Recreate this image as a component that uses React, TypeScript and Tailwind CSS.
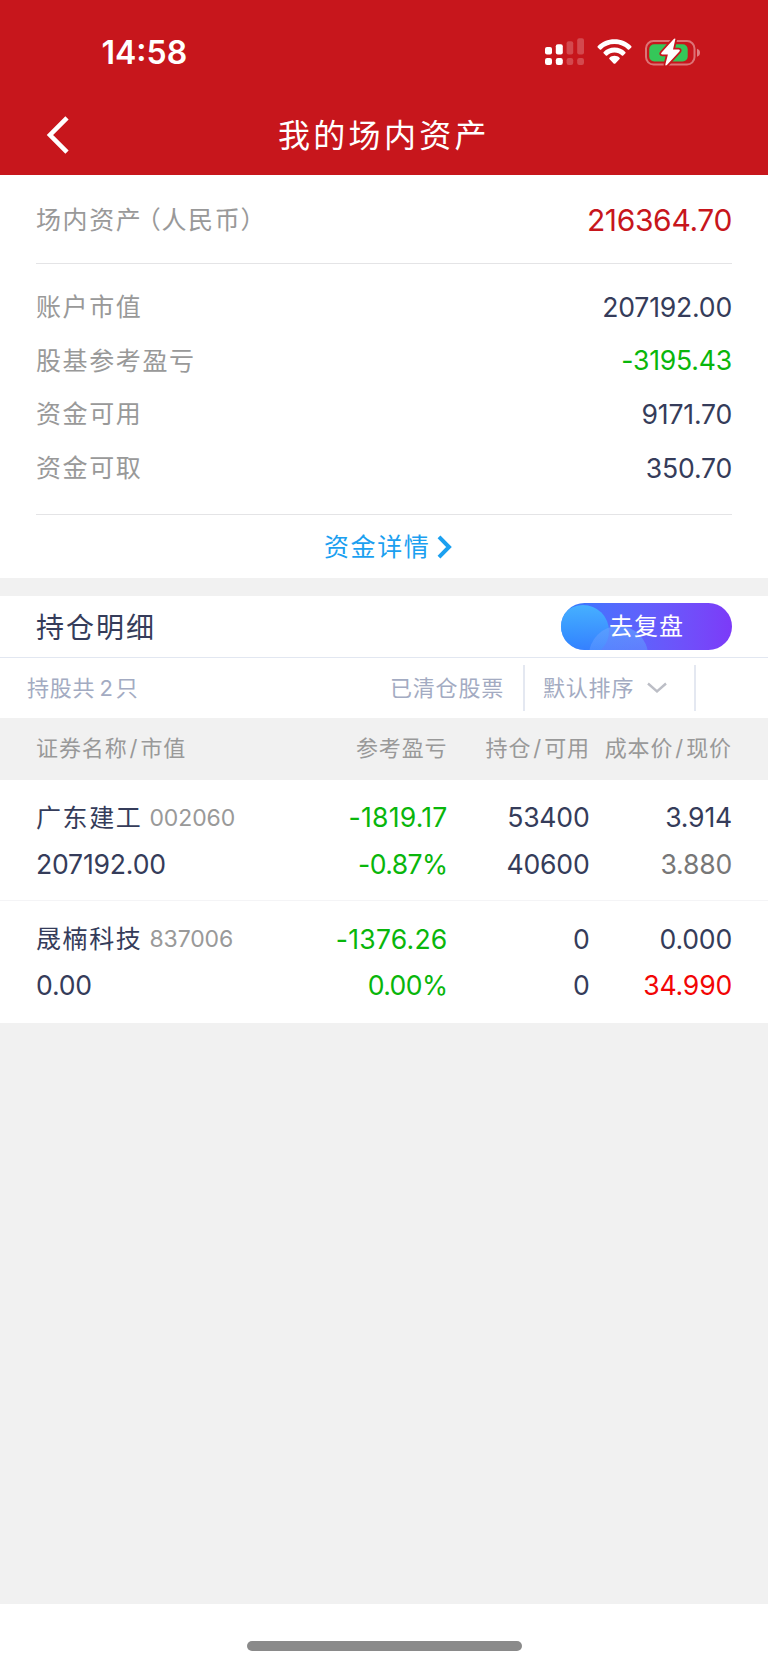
import React from 'react';

interface Holding {
  name: string;
  code: string;
  marketValue: string;
  profit: string;
  profitRate: string;
  position: string;
  available: string;
  cost: string;
  price: string;
  priceColor: string;
}

const summary = [
  { label: '账户市值', value: '207192.00', color: 'text-[#353c5a]' },
  { label: '股基参考盈亏', value: '-3195.43', color: 'text-[#09b60b]' },
  { label: '资金可用', value: '9171.70', color: 'text-[#353c5a]' },
  { label: '资金可取', value: '350.70', color: 'text-[#353c5a]' },
];

const holdings: Holding[] = [
  {
    name: '广东建工',
    code: '002060',
    marketValue: '207192.00',
    profit: '-1819.17',
    profitRate: '-0.87%',
    position: '53400',
    available: '40600',
    cost: '3.914',
    price: '3.880',
    priceColor: 'text-[#777777]',
  },
  {
    name: '晟楠科技',
    code: '837006',
    marketValue: '0.00',
    profit: '-1376.26',
    profitRate: '0.00%',
    position: '0',
    available: '0',
    cost: '0.000',
    price: '34.990',
    priceColor: 'text-[#f20505]',
  },
];

function SignalIcon() {
  return (
    <svg width="39" height="28" viewBox="0 0 39 28" fill="#fff">
      <rect x="0" y="9" width="7" height="7.5" rx="2" />
      <rect x="10.8" y="6.2" width="7" height="10.3" rx="2" />
      <rect x="0" y="20" width="7" height="7" rx="2.2" />
      <rect x="10.8" y="20" width="7" height="7" rx="2.2" />
      <g opacity="0.22">
        <rect x="21.6" y="3.2" width="6.6" height="13.3" rx="2" />
        <rect x="32.2" y="0.2" width="6.8" height="16.3" rx="2" />
        <rect x="21.6" y="20" width="6.6" height="7" rx="2.2" />
        <rect x="32.2" y="20" width="6.8" height="7" rx="2.2" />
      </g>
    </svg>
  );
}

function WifiIcon() {
  return (
    <svg width="35" height="26" viewBox="0 0 35 26" fill="#fff">
      <path d="M17.5 0.2C24.2 0.2 30 2.8 34.2 7C34.7 7.5 34.7 8 34.3 8.4L32.2 10.5C31.8 10.9 31.3 10.9 30.8 10.4C27.4 7.1 22.7 5.1 17.5 5.1C12.3 5.1 7.6 7.1 4.2 10.4C3.7 10.9 3.2 10.9 2.8 10.5L0.7 8.4C0.3 8 0.3 7.5 0.8 7C5 2.8 10.8 0.2 17.5 0.2Z" />
      <path d="M17.5 8.5C21.9 8.5 25.6 10.2 28.3 12.9C28.8 13.4 28.8 13.9 28.4 14.3L26.2 16.5C25.8 16.9 25.3 16.9 24.8 16.4C22.9 14.5 20.4 13.4 17.5 13.4C14.6 13.4 12.1 14.5 10.2 16.4C9.7 16.9 9.2 16.9 8.8 16.5L6.6 14.3C6.2 13.9 6.2 13.4 6.7 12.9C9.4 10.2 13.1 8.5 17.5 8.5Z" />
      <path d="M17.5 16.8C19.5 16.8 21.2 17.5 22.5 18.7C23 19.2 23 19.7 22.6 20.1L18.4 24.4C17.8 25 17.2 25 16.6 24.4L12.4 20.1C12 19.7 12 19.2 12.5 18.7C13.8 17.5 15.5 16.8 17.5 16.8Z" />
    </svg>
  );
}

function BatteryIcon() {
  return (
    <svg className="overflow-visible" width="56" height="28" viewBox="0 0 56 28">
      <rect x="1" y="2" width="48.5" height="23.6" rx="7.5" fill="none" stroke="#fff" strokeOpacity="0.4" strokeWidth="2" />
      <path d="M52 9.8C54.2 10.5 55 11.9 55 13.8C55 15.7 54.2 17.1 52 17.8Z" fill="#fff" fillOpacity="0.45" />
      <rect x="4.2" y="5.2" width="38.5" height="17.2" rx="5" fill="#35c759" />
      <path
        d="M28.8 0L16.6 13.6C15.7 14.7 16 15.5 17.3 15.5H22.9L20.4 25.3C20.2 26.6 21 27 21.9 26.1L34.4 12.4C35.2 11.4 34.9 10.5 33.7 10.5H28L30.3 0.6C30.6 -0.6 29.7 -1 28.8 0Z"
        fill="#fff"
        stroke="#c7161c"
        strokeWidth="3.6"
        paintOrder="stroke"
      />
    </svg>
  );
}

export default function App() {
  return (
    <div className="flex h-[1665px] w-[768px] flex-col overflow-hidden bg-[#f1f1f1] font-['Inter','Noto_Sans_CJK_SC',sans-serif] text-[26.6px] tracking-[-0.2px] text-[#353c5a]">
      <header className="h-[174.5px] shrink-0 bg-[#c7161c] text-white">
        <div className="flex h-[98px] items-center justify-between pt-[6px] pr-[67px] pl-[101.5px]">
          <span className="pt-[2px] text-[32px] font-semibold tracking-normal">14:58</span>
          <div className="flex items-center">
            <SignalIcon />
            <span className="ml-[13px] flex"><WifiIcon /></span>
            <span className="ml-[13px] flex pt-[1px]"><BatteryIcon /></span>
          </div>
        </div>
        <div className="flex h-[76px] items-center pl-[46px]">
          <svg className="mb-[2px]" width="24" height="38" viewBox="0 0 24 38" fill="none" stroke="#fff" strokeWidth="4.6">
            <path d="M21 1.8L4 19L21 36.2" />
          </svg>
          <h1 className="ml-[208px] text-[32px] leading-[48px] tracking-[3.3px]">我的场内资产</h1>
        </div>
      </header>

      <section className="h-[403.5px] shrink-0 bg-white px-9">
        <div className="flex h-[89.5px] items-center justify-between border-b border-[#e4e4e6] pt-[4px]">
          <span className="flex text-[25px] tracking-[1.6px] text-[#999999]">
            场内资产
            <span className="ml-[5px] [font-feature-settings:'palt']">（</span>
            人民币
            <span className="[font-feature-settings:'palt']">）</span>
          </span>
          <span className="text-[30px] tracking-[-0.35px] text-[#c7161c]">216364.70</span>
        </div>
        <div className="flex h-[251px] flex-col border-b border-[#e4e4e6] pt-[17px]">
          {summary.map(item => (
            <div key={item.label} className="flex h-[53.6px] items-center justify-between">
              <span className="text-[25px] tracking-[1.6px] text-[#999999]">{item.label}</span>
              <span className={item.color}>{item.value}</span>
            </div>
          ))}
        </div>
        <div className="flex h-[63px] items-center pt-[2px] pl-[288px] text-[#1ba0f0]">
          <span className="text-[25px] tracking-[1.6px]">资金详情</span>
          <svg className="mb-[2px] ml-[7px]" width="16" height="24" viewBox="0 0 16 24" fill="none" stroke="currentColor" strokeWidth="4">
            <path d="M2 1.8L12 12L2 22.2" />
          </svg>
        </div>
      </section>

      <section className="mt-[17.5px] shrink-0 bg-white">
        <div className="flex h-[62px] items-center justify-between border-b border-[#e2e7f1] px-9">
          <h2 className="pt-[4px] text-[28px] leading-[42px] tracking-[2px]">持仓明细</h2>
          <button className="relative h-[47px] w-[171px] overflow-hidden rounded-full bg-linear-to-r from-[#2b7bff] to-[#7c3af8] text-[24px] text-white">
            <span className="absolute top-[2px] -left-[4px] h-[52px] w-[52px] rounded-full bg-linear-to-b from-[#46b0ff] to-[#2b7bff]/60" />
            <span className="absolute top-[23px] left-[28px] h-[59px] w-[59px] rounded-full bg-linear-to-b from-[#64a0ff]/70 to-[#5080ff]/20" />
            <span className="relative top-[1px] tracking-[1px]">去复盘</span>
          </button>
        </div>
        <div className="flex h-[60.5px] items-center pl-[27px] text-[22px] text-[#a3abc2]">
          <span className="flex-1 pt-[1px] tracking-[0.8px]">
            持股共<span className="mr-[3px] ml-[4px] tracking-normal">2</span>只
          </span>
          <span className="mr-[19px] pt-[1px] tracking-[0.8px]">已清仓股票</span>
          <div className="flex h-[46px] w-[173px] items-center border-x-2 border-[#e4e8f1] pl-[18px]">
            <span className="pt-[1px] tracking-[0.8px]">默认排序</span>
            <svg className="ml-[13px]" width="20" height="12" viewBox="0 0 20 12" fill="none" stroke="#bcbec6" strokeWidth="2.4">
              <path d="M1 1.5L10 9.5L19 1.5" />
            </svg>
          </div>
          <div className="w-[72px]" />
        </div>

        <div className="grid h-[62px] grid-cols-[214px_197.5px_142.5px_142px] items-center bg-[#f1f1f1] pb-[1px] pl-9 text-right text-[22px] tracking-[0.9px] text-[#999999]">
          <span className="text-left">证券名称<span className="mx-[2px]">/</span>市值</span>
          <span>参考盈亏</span>
          <span>持仓<span className="mx-[2px]">/</span>可用</span>
          <span className="whitespace-nowrap">成本价<span className="mx-[2px]">/</span>现价</span>
        </div>

        {holdings.map((h, idx) => (
          <div
            key={h.code}
            className={`grid h-[121.3px] grid-cols-[214px_197.5px_142px_142.5px] grid-rows-[46.5px_46.5px] items-center pt-[15px] pl-9 text-right ${idx < holdings.length - 1 ? 'border-b border-[#f4f4f6]' : ''}`}
          >
            <span className="flex items-center text-left whitespace-nowrap">
              <span className="text-[25px] tracking-[1.6px]">{h.name}</span>
              <span className="ml-[7px] text-[23px] tracking-[-0.1px] text-[#999999]">{h.code}</span>
            </span>
            <span className="tracking-[0.2px] text-[#09b60b]">{h.profit}</span>
            <span>{h.position}</span>
            <span>{h.cost}</span>
            <span className="text-left">{h.marketValue}</span>
            <span className="tracking-[-0.6px] text-[#09b60b]">{h.profitRate}</span>
            <span>{h.available}</span>
            <span className={h.priceColor}>{h.price}</span>
          </div>
        ))}
      </section>

      <footer className="mt-auto flex h-[61.5px] shrink-0 justify-center bg-white pt-[37.5px]">
        <div className="h-[9.5px] w-[275px] rounded-full bg-[#8a8a8a]" />
      </footer>
    </div>
  );
}
